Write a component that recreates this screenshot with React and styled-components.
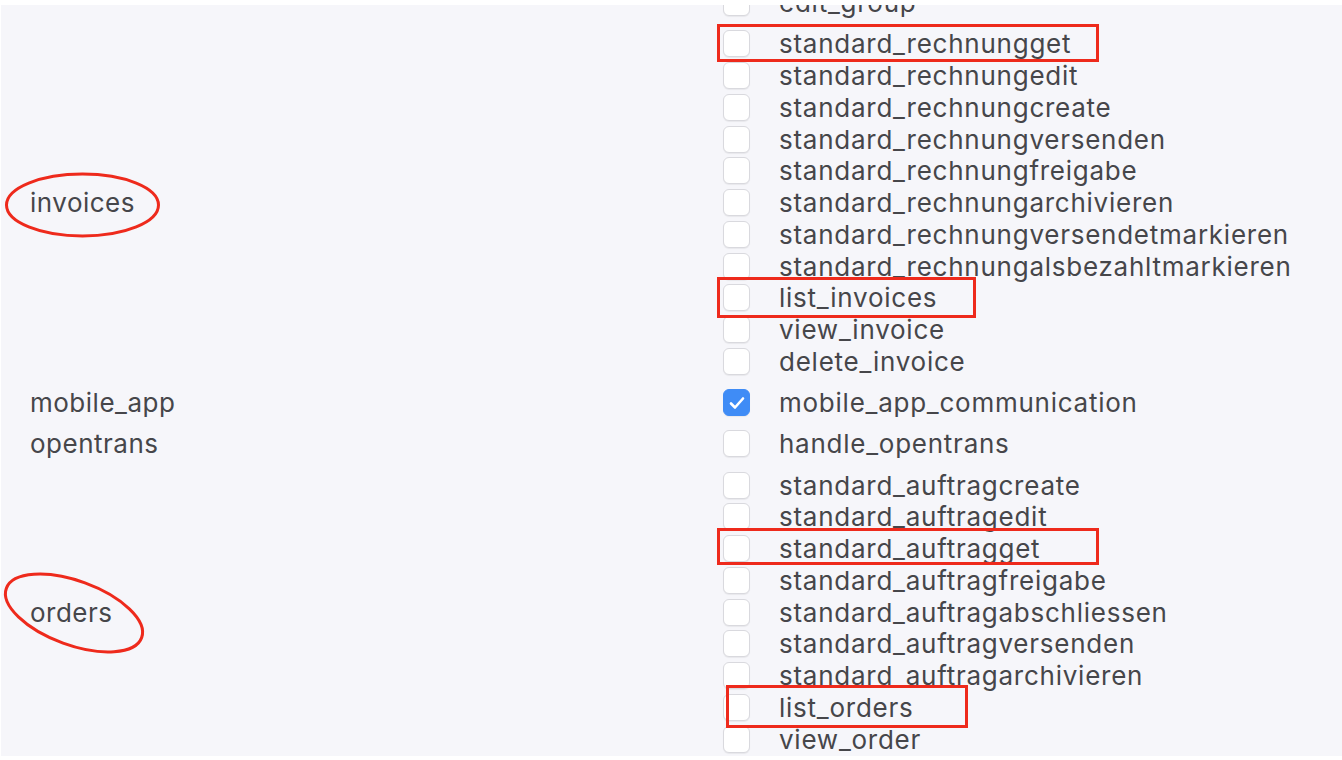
import React from 'react';
import styled, {createGlobalStyle} from "styled-components"

const groups = [
    {name: "", perms: [{id: "edit_group"}]},
    {name: "invoices", perms: [
        {id: "standard_rechnungget"},
        {id: "standard_rechnungedit"},
        {id: "standard_rechnungcreate"},
        {id: "standard_rechnungversenden"},
        {id: "standard_rechnungfreigabe"},
        {id: "standard_rechnungarchivieren"},
        {id: "standard_rechnungversendetmarkieren"},
        {id: "standard_rechnungalsbezahltmarkieren"},
        {id: "list_invoices"},
        {id: "view_invoice"},
        {id: "delete_invoice"},
    ]},
    {name: "mobile_app", perms: [{id: "mobile_app_communication", checked: true}]},
    {name: "opentrans", perms: [{id: "handle_opentrans"}]},
    {name: "orders", perms: [
        {id: "standard_auftragcreate"},
        {id: "standard_auftragedit"},
        {id: "standard_auftragget"},
        {id: "standard_auftragfreigabe"},
        {id: "standard_auftragabschliessen"},
        {id: "standard_auftragversenden"},
        {id: "standard_auftragarchivieren"},
        {id: "list_orders"},
        {id: "view_order"},
    ]},
]

function Checkbox({checked}){
    return(
        <Box checked={checked}>
            {checked && (
                <svg width="20" height="20" viewBox="0 0 20 20">
                    <path d="M4 10.5l4 4L16 5.5" fill="none" stroke="#fff" strokeWidth="2.6" strokeLinecap="round" strokeLinejoin="round"/>
                </svg>
            )}
        </Box>
    )
}

export default function App(){
    return(
        <>
            <GlobalStyle/>
            <Panel>
                <GroupList>
                    {groups.map((g, i) => (
                        <Group key={i}>
                            <GroupName>{g.name}</GroupName>
                            <PermList>
                                {g.perms.map(p => (
                                    <PermRow key={p.id}>
                                        <Checkbox checked={p.checked}/>
                                        <PermLabel>{p.id}</PermLabel>
                                    </PermRow>
                                ))}
                            </PermList>
                        </Group>
                    ))}
                </GroupList>
            </Panel>
            <Marks width="1342" height="760" viewBox="0 0 1342 760">
                <g fill="none" stroke="#ee2a1c" strokeWidth="3">
                    <ellipse cx="82.5" cy="205" rx="76" ry="31"/>
                    <ellipse cx="74" cy="613" rx="72" ry="32" transform="rotate(20 74 613)"/>
                    <rect x="718.5" y="25.5" width="379" height="35"/>
                    <rect x="718.5" y="278.5" width="256" height="38"/>
                    <rect x="718.5" y="529.5" width="379" height="34"/>
                    <rect x="727.5" y="686.5" width="239" height="40"/>
                </g>
            </Marks>
        </>
    )
}


// STYLED COMPONENTS
const GlobalStyle = createGlobalStyle`
body{
    margin: 0;
    background: #ffffff;
    font-family: Inter, "Noto Sans", sans-serif;
}
`;

const Panel = styled.div`
    margin: 5px 0 0 1px;
    height: 751px;
    background: #f6f6fa;
    overflow: hidden;
`;

const GroupList = styled.div`
    margin-top: -22.9px;
`;

const Group = styled.div`
    display: grid;
    grid-template-columns: 722px 1fr;
    align-items: center;
    padding: 4.75px 0;
`;

const GroupName = styled.div`
    padding-left: 29px;
    font-size: 26px;
    letter-spacing: 0.5px;
    color: #46464a;
`;

const PermList = styled.div`
    display: flex;
    flex-direction: column;
`;

const PermRow = styled.div`
    display: flex;
    align-items: center;
    gap: 30px;
    height: 31.75px;
`;

const Box = styled.span`
    flex: none;
    width: 27px;
    height: 27px;
    box-sizing: border-box;
    border-radius: 6px;
    display: flex;
    align-items: center;
    justify-content: center;
    background: ${p => p.checked ? "#3f8cf6" : "#ffffff"};
    border: 1.5px solid ${p => p.checked ? "#3f8cf6" : "#d9d9de"};
    box-shadow: 0 1px 1px rgba(0,0,0,0.06);
`;

const PermLabel = styled.span`
    font-size: 26px;
    letter-spacing: 0.75px;
    color: #46464a;
    white-space: nowrap;
    margin-left: -1px;
`;

const Marks = styled.svg`
    position: absolute;
    top: 0;
    left: 0;
    pointer-events: none;
`;
